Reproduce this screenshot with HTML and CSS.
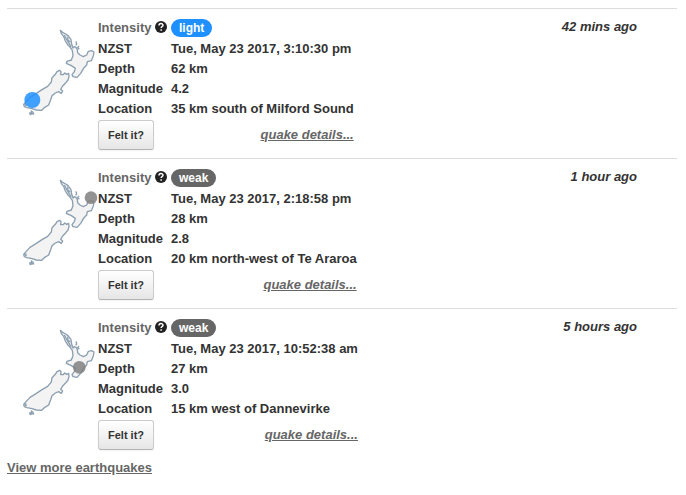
FILE: index.html
```html
<!DOCTYPE html>
<html lang="en">
<head>
<meta charset="utf-8">
<title>Recent earthquakes</title>
<link rel="stylesheet" href="styles.css">
</head>
<body>
<svg class="defs" aria-hidden="true">
  <defs>
    <g id="nz">
      <path d="M136 25 L144 32 L152 36 L159 41 L168 53 L170 67 L174 78 L178 74 L183 76 L187 82 L188 92 L195 99 L205 104 L215 99 L220 88 L230 86 L237 90 L235 102 L229 116 L217 119 L215 129 L207 137 L197 154 L186 166 L174 164 L171 158 L178 149 L181 139 L169 131 L154 124 L156 118 L169 114 L174 101 L172 85 L165 75 L158 68 L151 57 L146 43 L139 35 Z"/>
      <path d="M148 39 L156 54 L164 67 L168 75 M159 43 L158 54 L166 60 M183 58 L185 66 L182 70 M192 72 L188 77 L193 82"/>
      <path d="M134 145 L138 149 L137 158 L145 158 L149 153 L155 157 L161 154 L162 164 L159 174 L151 184 L143 192 L137 202 L143 207 L139 214 L131 209 L121 213 L111 221 L107 233 L101 249 L88 257 L80 265 L64 264 L51 260 L36 257 L28 254 L26 247 L33 239 L45 226 L63 215 L81 203 L98 193 L109 180 L111 167 L121 157 L126 149 Z"/>
      <path d="M49 267 L54 271 L56 276 L51 275 L46 278 L44 273 L49 272 Z M28 248 L34 245 M30 252 L35 249"/>
    </g>
  </defs>
</svg>
<main>
  <ul class="quakes">
    <li class="quake">
      <svg class="map" viewBox="0 0 249 300" role="img" aria-label="Map of New Zealand"><use href="#nz"/><circle class="light" cx="52" cy="234" r="24"/></svg>
      <div class="info">
        <table>
          <tr class="intensity"><th scope="row" class="muted">Intensity <svg class="help" viewBox="0 0 24 24" aria-hidden="true"><circle cx="12" cy="12" r="12"/><path d="M8 9 C8 4 16 4 16 8.5 C16 11 12.300 11 12.300 14"/><path d="M12.300 16.500 V19.500"/></svg></th><td><span class="badge light">light</span></td></tr>
          <tr><th scope="row">NZST</th><td>Tue, May 23 2017, 3:10:30 pm</td></tr>
          <tr><th scope="row">Depth</th><td>62 km</td></tr>
          <tr><th scope="row">Magnitude</th><td>4.2</td></tr>
          <tr><th scope="row">Location</th><td>35 km south of Milford Sound</td></tr>
        </table>
        <div class="actions"><button type="button">Felt it?</button><a href="#">quake details...</a></div>
      </div>
      <time>42 mins ago</time>
    </li>
    <li class="quake">
      <svg class="map" viewBox="0 0 249 300" role="img" aria-label="Map of New Zealand"><use href="#nz"/><circle class="weak" cx="228" cy="77" r="19"/></svg>
      <div class="info">
        <table>
          <tr class="intensity"><th scope="row" class="muted">Intensity <svg class="help" viewBox="0 0 24 24" aria-hidden="true"><circle cx="12" cy="12" r="12"/><path d="M8 9 C8 4 16 4 16 8.5 C16 11 12.300 11 12.300 14"/><path d="M12.300 16.500 V19.500"/></svg></th><td><span class="badge weak">weak</span></td></tr>
          <tr><th scope="row">NZST</th><td>Tue, May 23 2017, 2:18:58 pm</td></tr>
          <tr><th scope="row">Depth</th><td>28 km</td></tr>
          <tr><th scope="row">Magnitude</th><td>2.8</td></tr>
          <tr><th scope="row">Location</th><td>20 km north-west of Te Araroa</td></tr>
        </table>
        <div class="actions"><button type="button">Felt it?</button><a href="#">quake details...</a></div>
      </div>
      <time>1 hour ago</time>
    </li>
    <li class="quake">
      <svg class="map" viewBox="0 0 249 300" role="img" aria-label="Map of New Zealand"><use href="#nz"/><circle class="weak" cx="193" cy="136" r="19"/></svg>
      <div class="info">
        <table>
          <tr class="intensity"><th scope="row" class="muted">Intensity <svg class="help" viewBox="0 0 24 24" aria-hidden="true"><circle cx="12" cy="12" r="12"/><path d="M8 9 C8 4 16 4 16 8.5 C16 11 12.300 11 12.300 14"/><path d="M12.300 16.500 V19.500"/></svg></th><td><span class="badge weak">weak</span></td></tr>
          <tr><th scope="row">NZST</th><td>Tue, May 23 2017, 10:52:38 am</td></tr>
          <tr><th scope="row">Depth</th><td>27 km</td></tr>
          <tr><th scope="row">Magnitude</th><td>3.0</td></tr>
          <tr><th scope="row">Location</th><td>15 km west of Dannevirke</td></tr>
        </table>
        <div class="actions"><button type="button">Felt it?</button><a href="#">quake details...</a></div>
      </div>
      <time>5 hours ago</time>
    </li>
  </ul>
  <a class="more" href="#">View more earthquakes</a>
</main>
</body>
</html>
```
FILE: styles.css
```css
body {
  margin: 0;
  padding: 8px 9px 0 7px;
  background: #fff;
  color: #333;
  font: bold 13px/20px "Liberation Sans", Arial, sans-serif;
}

.defs {
  display: block;
  width: 0;
  height: 0;
}

a {
  color: #666;
}

.quakes {
  margin: 0;
  padding: 0;
  list-style: none;
}

.quake {
  display: flex;
  align-items: flex-start;
  padding: 9px 40px 8px 8px;
  border-top: 1px solid #ddd;
}

.map {
  flex: none;
  width: 83px;
  height: 100px;
  margin-top: 4px;
  overflow: visible;
  fill: #f3f3f3;
  stroke: #8c9fb0;
  stroke-width: 4;
  stroke-linejoin: round;
}

.map circle {
  stroke: none;
  opacity: 0.85;
}

.map .light {
  fill: #1e90ff;
}

.map .weak {
  fill: #808080;
}

table {
  width: 100%;
  border-collapse: collapse;
}

th,
td {
  height: 20px;
  padding: 0;
  text-align: left;
  white-space: nowrap;
  vertical-align: top;
}

th {
  width: 73px;
}

.intensity th,
.intensity td {
  height: 21px;
}

.muted {
  color: #666;
}

.help {
  width: 12px;
  height: 12px;
  vertical-align: -1px;
  fill: #222;
}

.help path {
  fill: none;
  stroke: #fff;
  stroke-width: 3;
}

.badge {
  display: block;
  width: max-content;
  margin-top: 1px;
  padding: 0 8px;
  border-radius: 9px;
  color: #fff;
  font-size: 12px;
  line-height: 18px;
}

.badge.light {
  background: #1e90ff;
}

.badge.weak {
  background: #666;
}

.actions {
  display: flex;
  align-items: center;
  justify-content: space-between;
  height: 31px;
}

.actions a {
  font-style: italic;
}

button {
  height: 30px;
  padding: 0 9px;
  border: 1px solid #ccc;
  border-bottom-color: #b3b3b3;
  border-radius: 3px;
  background: linear-gradient(#fff, #e6e6e6);
  box-shadow: 0 1px 2px rgba(0, 0, 0, 0.05);
  color: #333;
  font: bold 11px/20px "Liberation Sans", Arial, sans-serif;
}

time {
  margin-left: auto;
  font-style: italic;
  line-height: 18px;
}
```
